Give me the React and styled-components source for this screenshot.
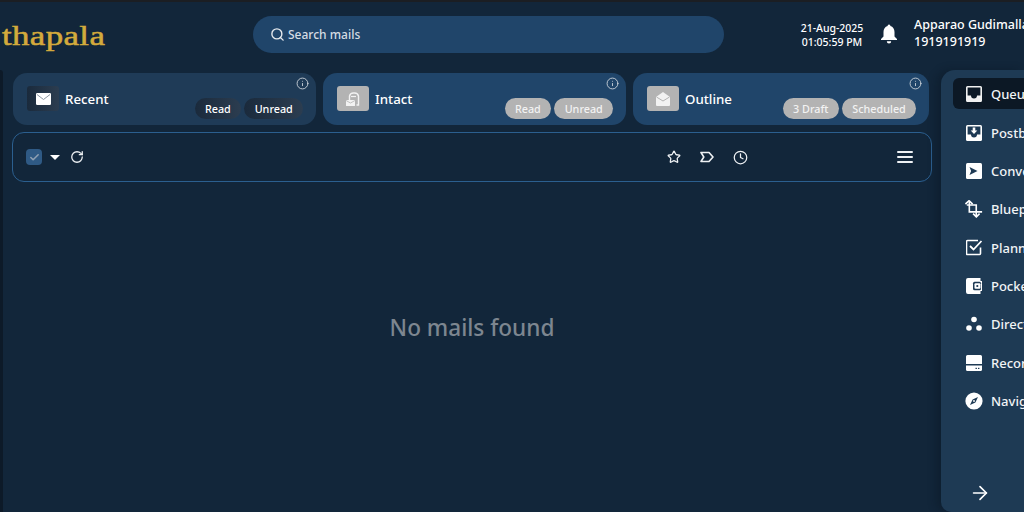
import styled, { createGlobalStyle } from 'styled-components';
import { Search, Info, RotateCw, Star, Clock, ArrowRight, Check } from 'lucide-react';

const GlobalStyle = createGlobalStyle`
  html, body {
    margin: 0;
    padding: 0;
    background: #12263a;
    overflow: hidden;
  }
  * { box-sizing: border-box; }
`;

const Page = styled.div`
  width: 1024px;
  height: 512px;
  overflow: hidden;
  display: flex;
  flex-direction: column;
  background: #12263a;
  border-top: 2px solid #1b1e23;
  color: #fff;
  font-family: "Noto Sans", sans-serif;
`;

const Header = styled.header`
  height: 68px;
  flex: none;
  display: flex;
  align-items: center;
  padding-bottom: 4px;
`;

const LogoBox = styled.div`
  width: 253px;
  flex: none;
  padding: 4px 0 0 2px;
`;

const Logo = styled.div`
  font-family: "Liberation Serif", serif;
  font-size: 27px;
  letter-spacing: 0.3px;
  color: #d4aa3c;
  transform: scaleX(1.29);
  transform-origin: left center;
  -webkit-text-stroke: 0.5px #d4aa3c;
`;

const SearchBar = styled.div`
  width: 471px;
  height: 37px;
  flex: none;
  border-radius: 19px;
  background: #20456a;
  display: flex;
  align-items: center;
  gap: 3px;
  padding-left: 17px;
  font-size: 12px;
  font-weight: 500;
  color: #d5dce3;
`;

const Clockbox = styled.div`
  width: 64px;
  margin-left: 76px;
  padding-top: 2px;
  flex: none;
  font-size: 10.5px;
  font-weight: 500;
  line-height: 14px;
  text-align: center;
  white-space: nowrap;
  display: flex;
  flex-direction: column;
  align-items: center;
`;

const BellButton = styled.div`
  margin-left: 14px;
  width: 22px;
  flex: none;
  display: flex;
  justify-content: center;
`;

const UserBox = styled.div`
  margin-left: 14px;
  margin-top: -1px;
  flex: none;
  font-size: 12.5px;
  font-weight: 500;
  line-height: 16.5px;
  white-space: nowrap;
`;

const Body = styled.div`
  flex: 1;
  display: flex;
  min-height: 0;
`;

const LeftEdge = styled.div`
  width: 3px;
  flex: none;
  background: #0d1a28;
  border-top-right-radius: 4px;
`;

const Content = styled.main`
  width: 938px;
  flex: none;
  padding: 3px 0 0 9px;
  display: flex;
  flex-direction: column;
`;

const Tabs = styled.div`
  display: flex;
  gap: 7px;
  padding-left: 1px;
`;

const Tab = styled.div`
  position: relative;
  width: ${p => p.$w}px;
  height: 52px;
  border-radius: 14px;
  background: ${p => (p.$active ? '#1f3b57' : '#20456a')};
  display: flex;
  align-items: center;
  padding-left: 14px;
`;

const TabIcon = styled.div`
  width: 32px;
  height: 25px;
  margin-top: -1px;
  border-radius: 3px;
  background: ${p => (p.$active ? 'linear-gradient(90deg, #1a2a3c, #2c3d50)' : '#b3b3b3')};
  display: flex;
  align-items: center;
  justify-content: center;
`;

const TabLabel = styled.span`
  margin-left: 6px;
  font-size: 13.3px;
  font-weight: 500;
`;

const InfoMark = styled.div`
  position: absolute;
  top: 4px;
  right: 7px;
  display: flex;
  color: #d3d9df;
`;

const Pills = styled.div`
  position: absolute;
  right: 13px;
  bottom: 6px;
  display: flex;
  gap: 3.5px;
`;

const Pill = styled.span`
  height: 21px;
  padding: 0 10.2px;
  border-radius: 11px;
  background: ${p => (p.$active ? 'linear-gradient(90deg, #1a2a3c, #2c3d50)' : '#b3b3b3')};
  color: ${p => (p.$active ? '#fff' : '#f2f2f2')};
  font-size: 10.8px;
  font-weight: 500;
  line-height: 21px;
  white-space: nowrap;
`;

const Toolbar = styled.div`
  margin-top: 7px;
  width: 920px;
  height: 50px;
  flex: none;
  border: 1px solid #2b5f8f;
  border-radius: 12px;
  display: flex;
  align-items: center;
  padding-left: 13px;
`;

const CheckBox = styled.div`
  width: 16px;
  height: 16px;
  border-radius: 4px;
  background: #2f5a85;
  color: #8fa0b3;
  display: flex;
  align-items: center;
  justify-content: center;
`;

const Caret = styled.div`
  margin-left: 8px;
  width: 0;
  height: 0;
  border-left: 5px solid transparent;
  border-right: 5px solid transparent;
  border-top: 5.5px solid #fff;
`;

const ToolIcon = styled.div`
  margin-left: ${p => p.$gap}px;
  display: flex;
  color: #eef1f4;
`;

const Empty = styled.div`
  flex: 1;
  display: flex;
  justify-content: center;
  padding-top: 130px;
  font-size: 22.6px;
  font-weight: 500;
  color: #7d8690;
  width: 920px;
`;

const Sidebar = styled.aside`
  flex: none;
  width: 83px;
  overflow: hidden;
  background: #1e3a54;
  border-top-left-radius: 14px;
  border-bottom-left-radius: 10px;
  padding-top: 8px;
  position: relative;
  box-shadow: -5px 0 8px rgba(8, 18, 28, 0.3);
`;

const NavList = styled.nav`
  display: flex;
  flex-direction: column;
  gap: 7.1px;
`;

const NavItem = styled.div`
  margin-left: 12px;
  height: 31.3px;
  display: flex;
  align-items: center;
  gap: 9px;
  padding: 1px 0 0 13px;
  font-size: 13px;
  font-weight: 500;
  border-radius: 6px 0 0 6px;
  background: ${p => (p.$active ? '#0c1825' : 'transparent')};
  color: #f2f4f6;
  white-space: nowrap;
`;

const NavIcon = styled.span`
  width: 16px;
  height: 18px;
  flex: none;
  display: flex;
  align-items: center;
  justify-content: center;

  svg {
    flex: none;
  }
`;

const Expand = styled.div`
  position: absolute;
  left: 28px;
  bottom: 8px;
  display: flex;
`;

const Glyph = ({ children, size = 16, vb = 16 }) => (
  <svg width={size} height={size} viewBox={`0 0 ${vb} ${vb}`} fill="#fff">{children}</svg>
);

const BellIcon = () => (
  <svg width="18" height="20" viewBox="0 0 18 20" fill="#fff">
    <path d="M9 0.5a1.4 1.4 0 0 1 1.4 1.5C13 2.7 14.5 5 14.5 8v4.5L17 15v1H1v-1l2.5-2.5V8C3.5 5 5 2.7 7.6 2A1.4 1.4 0 0 1 9 0.5z" />
    <path d="M6.8 17.2h4.4a2.2 2.2 0 0 1-4.4 0z" />
  </svg>
);

const MenuLines = () => (
  <svg width="16" height="12" viewBox="0 0 16 12" fill="#eef1f4">
    <rect y="0" width="16" height="2" rx="1" />
    <rect y="5" width="16" height="2" rx="1" />
    <rect y="10" width="16" height="2" rx="1" />
  </svg>
);

const MailIcon = () => (
  <svg width="15" height="12" viewBox="0 0 15 12">
    <rect width="15" height="12" rx="1.2" fill="#fff" />
    <path d="M1 1.5 7.5 6.5 14 1.5" fill="none" stroke="#8b95a0" strokeWidth="1" />
  </svg>
);

const IntactIcon = () => (
  <svg width="16" height="16" viewBox="0 0 16 16" fill="none">
    <path d="M4.5 9V5a4 4 0 0 1 4-3h1a4 4 0 0 1 4 3v9h-2" stroke="#f2f2f2" strokeWidth="1.4" />
    <path d="M6 5.5h5" stroke="#f2f2f2" strokeWidth="1.2" />
    <rect x="1" y="9" width="9" height="6" rx="0.6" fill="#f2f2f2" />
    <path d="M1.2 9.6 5.5 12l4.3-2.4" stroke="#b3b3b3" strokeWidth="0.8" />
  </svg>
);

const OpenMailIcon = () => (
  <svg width="16" height="16" viewBox="0 0 16 16">
    <path d="M1 6 8 1l7 5v8a1 1 0 0 1-1 1H2a1 1 0 0 1-1-1z" fill="#f2f2f2" />
    <path d="M1.5 6 8 10l6.5-4" fill="none" stroke="#b3b3b3" strokeWidth="1" />
  </svg>
);

const LabelIcon = () => (
  <svg width="14" height="12" viewBox="0 0 14 12" fill="none">
    <path d="M1 1.5h8l4 4.5-4 4.5H1L3.8 6z" stroke="#eef1f4" strokeWidth="1.6" strokeLinejoin="round" />
  </svg>
);

const QueueIcon = () => (
  <Glyph>
    <path d="M1.5 0h13A1.5 1.5 0 0 1 16 1.5v13a1.5 1.5 0 0 1-1.5 1.5h-13A1.5 1.5 0 0 1 0 14.5v-13A1.5 1.5 0 0 1 1.5 0z" fill="#f0f0f0" />
    <path d="M1.6 1.6h12.8v8h-3.4a3 3 0 0 1-6 0H1.6z" fill="#0c1825" />
  </Glyph>
);

const PostboxIcon = () => (
  <Glyph>
    <rect width="16" height="16" rx="1.5" />
    <path d="M1.6 1.6h12.8v8h-3.4a3 3 0 0 1-6 0H1.6z" fill="#1e3a54" />
    <path d="M6.7 2.5h2.6v3h2L8 9 4.7 5.5h2z" />
  </Glyph>
);

const ConvertIcon = () => (
  <Glyph>
    <rect width="16" height="16" rx="1.5" />
    <path d="M3.5 4 11.5 8l-8 4 1.6-4z" fill="#1e3a54" />
  </Glyph>
);

const BlueprintIcon = () => (
  <svg width="18" height="18" viewBox="0 0 20 20" fill="none" stroke="#fff" strokeWidth="1.8">
    <path d="M0.5 4.5 4.5 0.8 8.5 4.5" />
    <path d="M4.8 1v12.2H19" />
    <path d="M2 5.5h10.5V19" />
    <path d="M9 15.2l3.6 3.6 3.6-3.6" />
  </svg>
);

const PlannerIcon = () => (
  <svg width="17" height="17" viewBox="0 0 17 17" fill="none" stroke="#fff" strokeWidth="1.6">
    <path d="M14.5 8.5v6a1 1 0 0 1-1 1h-12a1 1 0 0 1-1-1v-12a1 1 0 0 1 1-1H12" />
    <path d="M4 7l3.5 3.5L15.5 2" strokeWidth="1.8" />
  </svg>
);

const PocketIcon = () => (
  <Glyph>
    <path d="M2 0h12.5v3H16v10h-1.5v3H2a2 2 0 0 1-2-2V2a2 2 0 0 1 2-2z" />
    <rect x="7" y="3.8" width="8" height="8.4" rx="1.5" fill="#1e3a54" />
    <rect x="8.5" y="5.3" width="6" height="5.4" rx="1" fill="#fff" />
    <circle cx="11.3" cy="8" r="1.1" fill="#1e3a54" />
  </Glyph>
);

const DirectoryIcon = () => (
  <Glyph>
    <circle cx="8" cy="3.5" r="2.8" />
    <circle cx="3" cy="12" r="2.8" />
    <circle cx="13" cy="12" r="2.8" />
  </Glyph>
);

const RecordIcon = () => (
  <Glyph>
    <path d="M1.5 0h13A1.5 1.5 0 0 1 16 1.5V9H0V1.5A1.5 1.5 0 0 1 1.5 0z" />
    <path d="M0 10.5h16v4a1.5 1.5 0 0 1-1.5 1.5h-13A1.5 1.5 0 0 1 0 14.5z" />
    <rect x="9.5" y="12.8" width="1.4" height="1.2" fill="#1e3a54" />
    <rect x="12" y="12.8" width="1.4" height="1.2" fill="#1e3a54" />
  </Glyph>
);

const NavigateIcon = () => (
  <svg width="18" height="18" viewBox="0 0 18 18">
    <circle cx="9" cy="9" r="8.6" fill="#fff" />
    <path d="M13 5 10.4 10.4 5 13l2.6-5.4z" fill="#1e3a54" />
    <circle cx="9" cy="9" r="0.9" fill="#fff" />
  </svg>
);

const tabs = [
  { label: 'Recent', w: 303, active: true, icon: <MailIcon />, pills: ['Read', 'Unread'] },
  { label: 'Intact', w: 303, icon: <IntactIcon />, pills: ['Read', 'Unread'] },
  { label: 'Outline', w: 296, icon: <OpenMailIcon />, pills: ['3 Draft', 'Scheduled'] },
];

const navItems = [
  { label: 'Queue', icon: <QueueIcon />, active: true },
  { label: 'Postbox', icon: <PostboxIcon /> },
  { label: 'Conversations', icon: <ConvertIcon /> },
  { label: 'Blueprints', icon: <BlueprintIcon /> },
  { label: 'Planner', icon: <PlannerIcon /> },
  { label: 'Pocket', icon: <PocketIcon /> },
  { label: 'Directory', icon: <DirectoryIcon /> },
  { label: 'Records', icon: <RecordIcon /> },
  { label: 'Navigate', icon: <NavigateIcon /> },
];

const App = () => (
  <Page>
    <GlobalStyle />
    <Header>
      <LogoBox><Logo>thapala</Logo></LogoBox>
      <SearchBar>
        <Search size={15} color="#e6eaee" strokeWidth={2.2} />
        <span>Search mails</span>
      </SearchBar>
      <Clockbox>
        <span>21-Aug-2025</span>
        <span>01:05:59 PM</span>
      </Clockbox>
      <BellButton><BellIcon /></BellButton>
      <UserBox>
        <div>Apparao Gudimalla</div>
        <div>1919191919</div>
      </UserBox>
    </Header>
    <Body>
      <LeftEdge />
      <Content>
        <Tabs>
          {tabs.map(tab => (
            <Tab key={tab.label} $w={tab.w} $active={tab.active}>
              <TabIcon $active={tab.active}>{tab.icon}</TabIcon>
              <TabLabel>{tab.label}</TabLabel>
              <InfoMark><Info size={13} strokeWidth={1.6} /></InfoMark>
              <Pills>
                {tab.pills.map(pill => <Pill key={pill} $active={tab.active}>{pill}</Pill>)}
              </Pills>
            </Tab>
          ))}
        </Tabs>
        <Toolbar>
          <CheckBox><Check size={11} strokeWidth={3.4} /></CheckBox>
          <Caret />
          <ToolIcon $gap={10}><RotateCw size={14} strokeWidth={2.2} /></ToolIcon>
          <ToolIcon $gap={583}><Star size={14} strokeWidth={2.2} /></ToolIcon>
          <ToolIcon $gap={19}><LabelIcon /></ToolIcon>
          <ToolIcon $gap={19}><Clock size={15} strokeWidth={2} /></ToolIcon>
          <ToolIcon $gap={149}><MenuLines /></ToolIcon>
        </Toolbar>
        <Empty>No mails found</Empty>
      </Content>
      <Sidebar>
        <NavList>
          {navItems.map(item => (
            <NavItem key={item.label} $active={item.active}>
              <NavIcon>{item.icon}</NavIcon>
              {item.label}
            </NavItem>
          ))}
        </NavList>
        <Expand><ArrowRight size={22} color="#fff" strokeWidth={1.8} /></Expand>
      </Sidebar>
    </Body>
  </Page>
);

export default App;
